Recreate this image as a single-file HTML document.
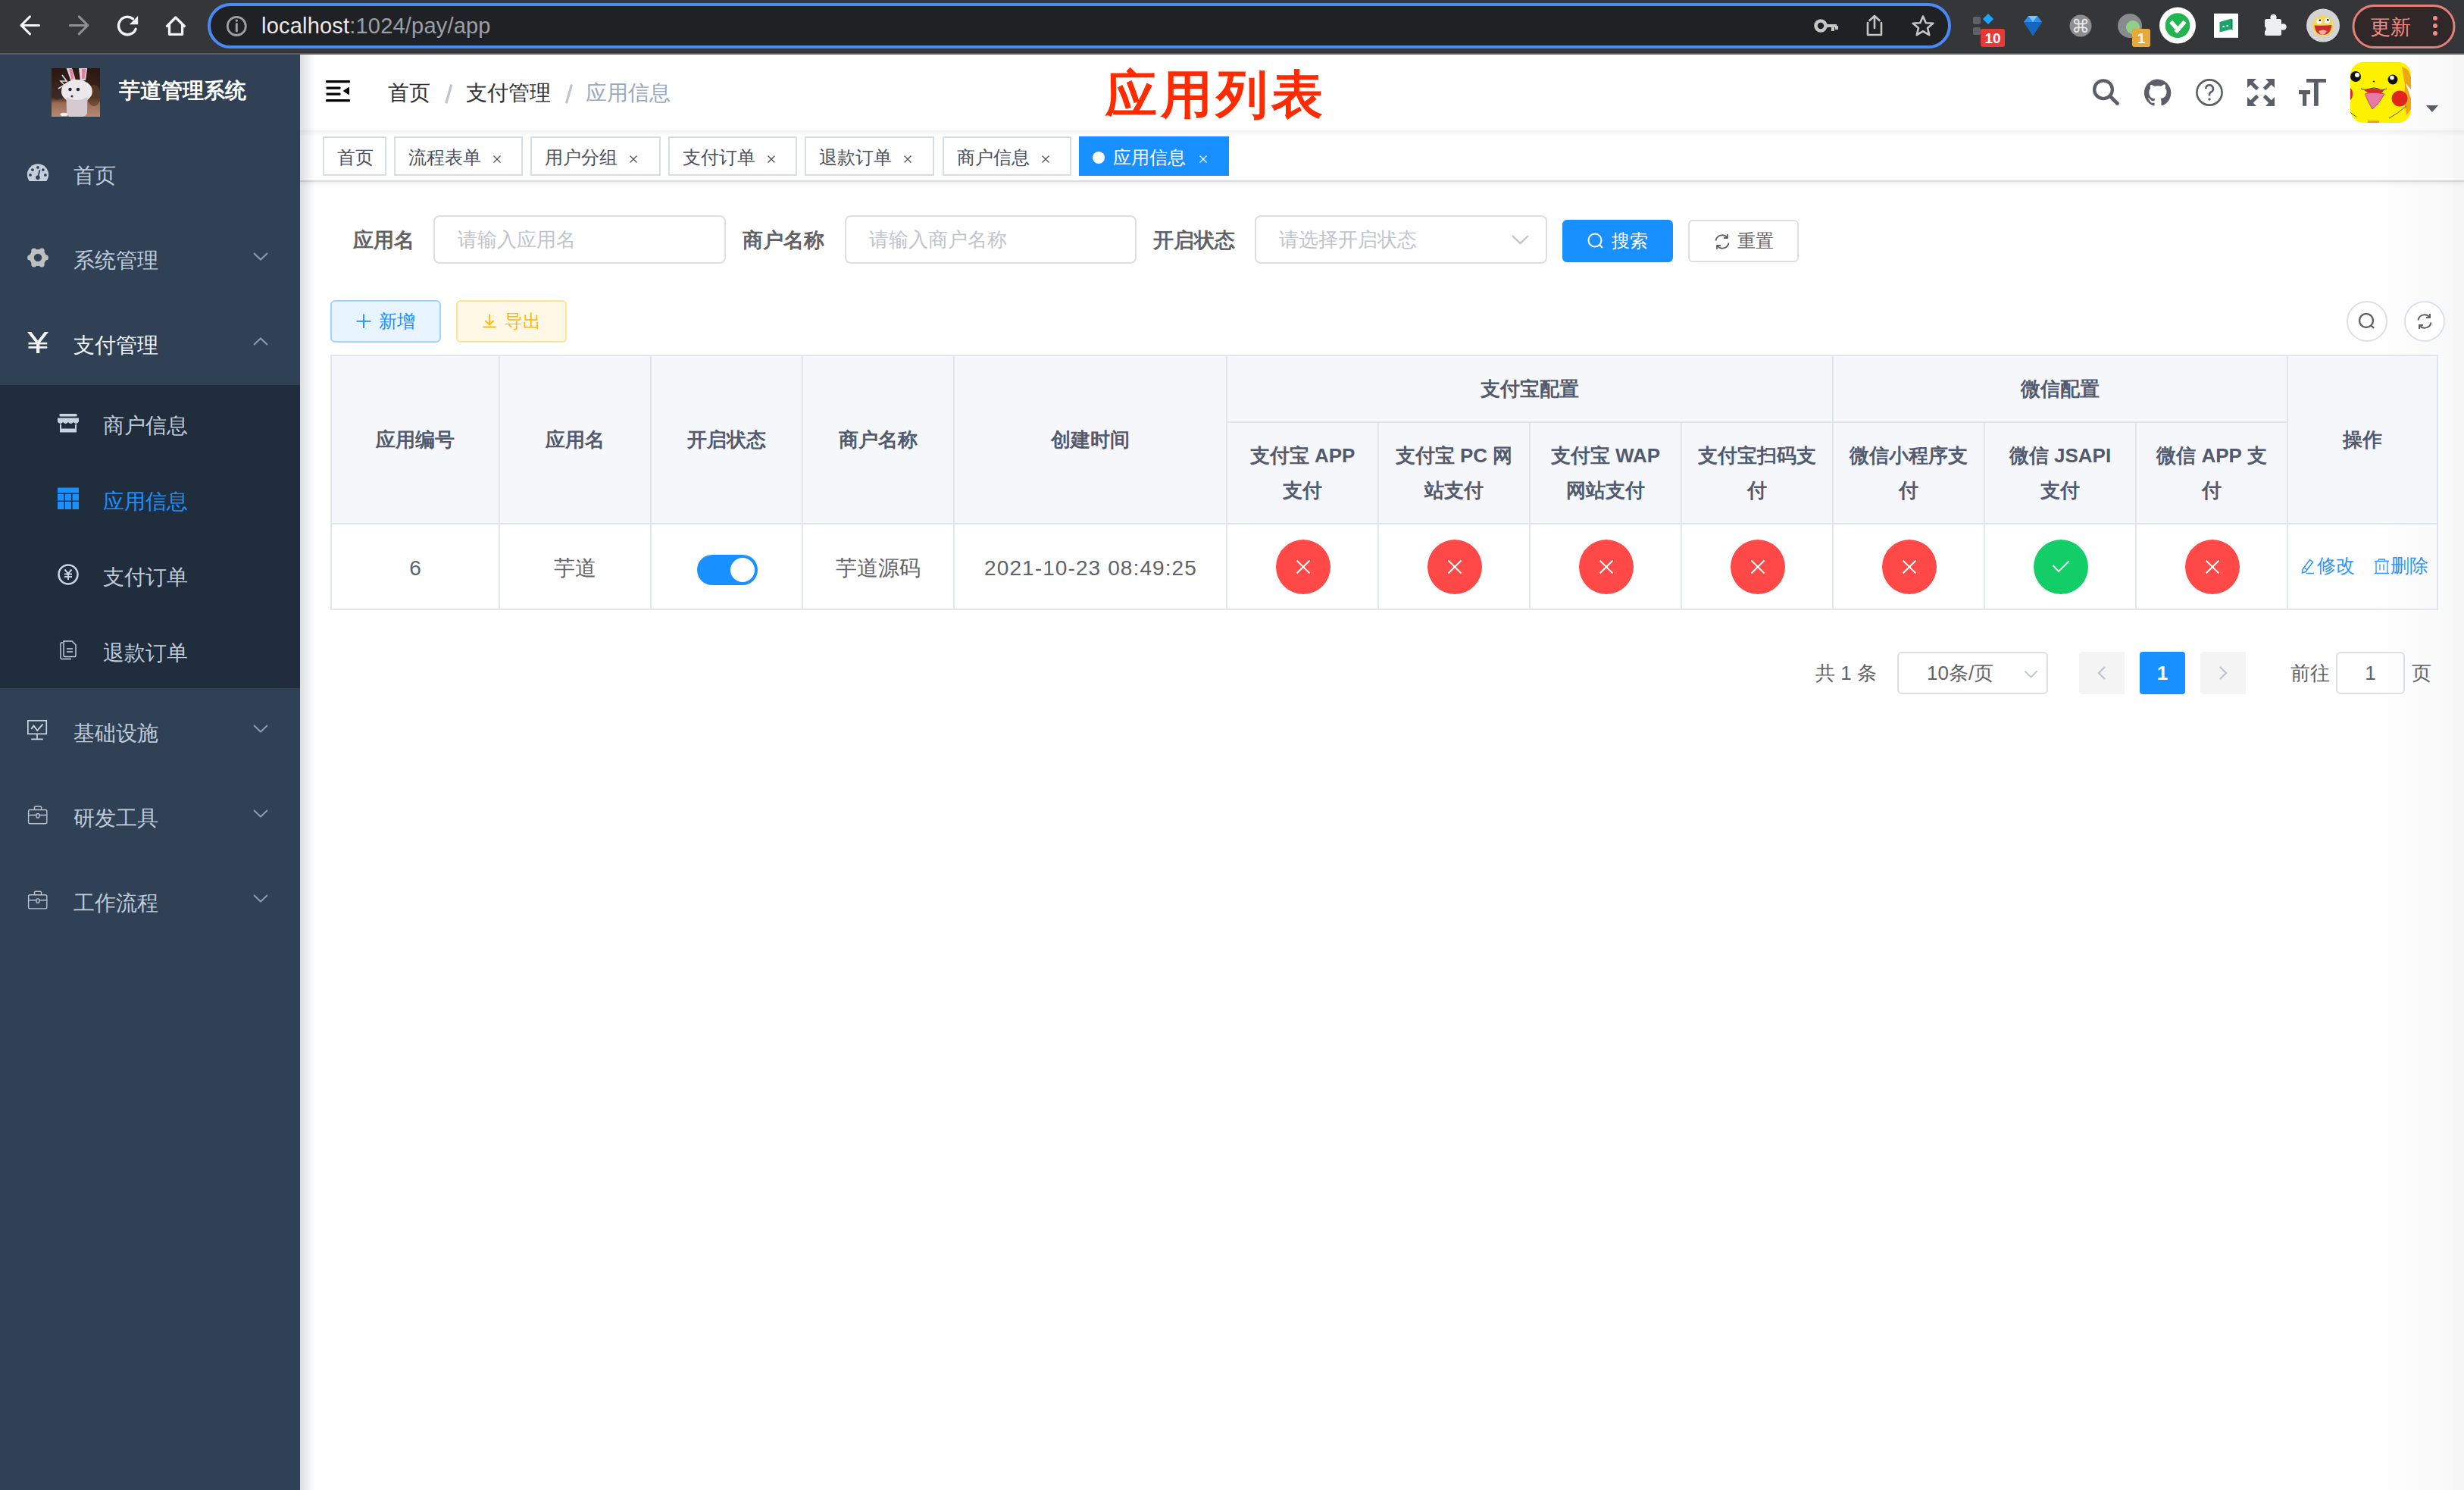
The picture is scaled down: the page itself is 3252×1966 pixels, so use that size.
<!DOCTYPE html>
<html><head><meta charset="utf-8">
<style>
*{box-sizing:border-box;margin:0;padding:0}
html,body{width:3252px;height:1966px;overflow:hidden;background:#fff;font-family:"Liberation Sans",sans-serif}
.a{position:absolute}
/* chrome */
#chrome{left:0;top:0;width:3252px;height:72px;background:#35363a;border-bottom:2px solid #5b5c60}
#url{left:274px;top:4px;width:2301px;height:60px;border:4px solid #4a8af4;border-radius:30px;background:#202124}
#urltext{left:345px;top:18px;font-size:29px;color:#e8eaed;white-space:nowrap;letter-spacing:0.2px}
#urltext span{color:#9aa0a6}
/* sidebar */
#side{left:0;top:72px;width:396px;height:1894px;background:#304156}
#sub{left:0;top:508px;width:396px;height:400px;background:#1f2d3d}
.mi{position:absolute;color:#bfcbd9;font-size:28px;white-space:nowrap;line-height:28px}
.chev{position:absolute;width:12px;height:12px;border-right:2px solid #8e9cad;border-bottom:2px solid #8e9cad}
/* content */
#navbar{left:396px;top:72px;width:2856px;height:100px;background:#fff}
#tags{left:396px;top:172px;width:2856px;height:68px;background:#fff;border-bottom:2px solid #d8dce5;box-shadow:0 2px 6px rgba(0,21,41,.08)}
.tag{position:absolute;top:180px;height:52px;border:2px solid #d8dce5;background:#fff;color:#495060;font-size:24px;line-height:51px;white-space:nowrap;padding-left:17px}
.tag .x{position:absolute;font-size:22px;color:#495060}
.lbl{position:absolute;top:301px;font-size:27px;font-weight:bold;color:#606266;white-space:nowrap;line-height:32px}
.inp{position:absolute;top:284px;height:64px;border:2px solid #dcdfe6;border-radius:8px;background:#fff;color:#c0c4cc;font-size:26px;line-height:60px;padding-left:30px;white-space:nowrap}
.btn{position:absolute;height:56px;border-radius:6px;font-size:24px;line-height:52px;white-space:nowrap;text-align:center}
.th{position:absolute;color:#515a6e;font-size:26px;font-weight:bold;text-align:center;line-height:46px;white-space:nowrap}
.td{position:absolute;color:#606266;font-size:28px;text-align:center;white-space:nowrap}
.vl{position:absolute;width:2px;background:#dfe6ec}
.hl{position:absolute;height:2px;background:#dfe6ec}
.circ{position:absolute;width:72px;height:72px;border-radius:36px;top:712px}
.red{background:#ff4949}
.green{background:#13ce66}
.pg{position:absolute;top:860px;height:56px;border-radius:4px;font-size:26px;text-align:center;line-height:56px}
</style></head><body>
<!-- CHROME -->
<div id="chrome" class="a"></div>
<div id="url" class="a"></div>
<div id="urltext" class="a">localhost<span>:1024/pay/app</span></div>


<!-- chrome icons -->
<svg class="a" style="left:0;top:0" width="3252" height="72">
 <g fill="none" stroke-linecap="round" stroke-linejoin="round">
  <path d="M28 33.4 H51.5 M28 33.4 L39.5 21.9 M28 33.4 L39.5 44.9" stroke="#f4f5f6" stroke-width="3"/>
  <path d="M115.8 33.4 H92.3 M115.8 33.4 L104.3 21.9 M115.8 33.4 L104.3 44.9" stroke="#8e9094" stroke-width="3"/>
  <path d="M179.1 38.3 A11.7 11.7 0 1 1 175.5 24.8" stroke="#f1f3f4" stroke-width="3.4" stroke-linecap="round"/>
  <path d="M182.1 21 V32.2 H170.9 Z" fill="#f1f3f4" stroke="none"/>
  <path d="M220.5 34.5 L231.8 23 L243.3 34.5 M223.5 32 V45.3 H240.6 V32" stroke="#f1f3f4" stroke-width="3.3"/>
  <circle cx="312.3" cy="34.5" r="12" stroke="#9aa0a6" stroke-width="2.8"/>
  <path d="M312.3 31.5 V41" stroke="#9aa0a6" stroke-width="3"/>
  <circle cx="312.3" cy="27.2" r="1.6" fill="#9aa0a6" stroke="none"/>
  <!-- key -->
  <circle cx="2403" cy="34" r="6.5" stroke="#c4c7c5" stroke-width="4.5"/>
  <path d="M2410 34 H2424 M2419 34 V41 M2424 34 V39" stroke="#c4c7c5" stroke-width="4" stroke-linecap="butt"/>
  <!-- share -->
  <path d="M2465 30 V46 H2483 V30" stroke="#c4c7c5" stroke-width="2.6"/>
  <path d="M2474 37 V21 M2467.5 27 L2474 21 L2480.5 27" stroke="#c4c7c5" stroke-width="2.6"/>
  <!-- star -->
  <path d="M2538 21.5 L2541.8 30.2 L2551.3 30.8 L2544 37 L2546.3 46.2 L2538 41.2 L2529.7 46.2 L2532 37 L2524.7 30.8 L2534.2 30.2 Z" stroke="#c4c7c5" stroke-width="2.6"/>
 </g>
 <!-- ext 1 -->
 <rect x="2604" y="22" width="10" height="10" rx="2" fill="#5f6368"/>
 <rect x="2604" y="36" width="10" height="10" rx="2" fill="#5f6368"/>
 <rect x="2619" y="20" width="10" height="10" fill="#1aa3ff" transform="rotate(45 2624 25)"/>
 <rect x="2614" y="38" width="32" height="24" rx="3" fill="#e53935"/>
 <text x="2630" y="57" font-size="19" font-family="Liberation Sans" font-weight="bold" fill="#fff" text-anchor="middle">10</text>
 <!-- gem -->
 <path d="M2671 29 L2677 21 L2689 21 L2695 29 L2683 47 Z" fill="#2f8fe6"/>
 <path d="M2671 29 L2695 29 L2683 47 Z" fill="#1566c0"/>
 <path d="M2677 21 L2683 29 L2689 21 Z" fill="#7cc6ff"/>
 <!-- cmd -->
 <circle cx="2746" cy="34" r="14.5" fill="#8d8e91"/>
 <text x="2746" y="43" font-size="24" font-family="Liberation Sans" fill="#e8e8e8" text-anchor="middle">&#8984;</text>
 <!-- grey circle w badge -->
 <circle cx="2811" cy="34" r="16" fill="#8a8b8e"/>
 <circle cx="2815" cy="36" r="9" fill="#8fd08a"/>
 <rect x="2814" y="38" width="24" height="24" rx="3" fill="#e8a93c"/>
 <text x="2826" y="57" font-size="19" font-family="Liberation Sans" font-weight="bold" fill="#fff" text-anchor="middle">1</text>
 <!-- green y -->
 <circle cx="2874" cy="33.6" r="24" fill="#fff"/>
 <circle cx="2874" cy="33.6" r="16.3" fill="#22b54f"/>
 <path d="M2865 28.5 L2872.5 37 M2883.5 28.5 L2871.5 42.5" stroke="#fff" stroke-width="5.5" stroke-linecap="butt"/>
 <!-- green square -->
 <rect x="2922" y="17.8" width="32" height="32" fill="#fff"/>
 <path d="M2929.5 29 L2945 24.5 V38.5 L2929.5 42.5 Z" fill="#1aa36b"/>
 <path d="M2945 24.5 L2946.5 26 V40 L2945 38.5 Z" fill="#0d7a4d"/>
 <rect x="2933.5" y="34" width="2.2" height="2.2" fill="#fff"/><rect x="2938.5" y="33" width="2.2" height="2.2" fill="#fff"/>
 <!-- puzzle -->
 <g fill="#eeeff1">
  <rect x="2989" y="25" width="22" height="22" rx="2.5"/>
  <circle cx="3000.5" cy="23" r="4.2"/>
  <circle cx="3013.5" cy="35.5" r="4.2"/>
 </g>
 <circle cx="2987" cy="38" r="3.6" fill="#35363a"/>
 <!-- emoji avatar -->
 <circle cx="3066" cy="33.6" r="22" fill="#d4d4d4"/>
 <circle cx="3066" cy="34.5" r="14" fill="#f8d65a"/>
 <path d="M3054.5 33.5 Q3066 34 3077.5 33 Q3076 46 3066 46 Q3056 46 3054.5 33.5 Z" fill="#c9302c"/>
 <path d="M3060 41 Q3066 38 3071 41 Q3068 46 3066 46 Q3062 46 3060 41 Z" fill="#f7a8a8"/>
 <circle cx="3061" cy="28" r="3.6" fill="#fff"/><circle cx="3071.5" cy="27.5" r="3.6" fill="#fff"/>
 <circle cx="3061.8" cy="26.8" r="1.3" fill="#000"/><circle cx="3072.3" cy="26.3" r="1.3" fill="#000"/>
 <!-- update pill -->
 <rect x="3106" y="7.5" width="133" height="55" rx="27.5" fill="#302729" stroke="#e57f77" stroke-width="3"/>
 <text x="3154.5" y="44.5" font-size="27" font-family="Liberation Sans" fill="#f28b82" text-anchor="middle">更新</text>
 <circle cx="3214" cy="24" r="3" fill="#f28b82"/><circle cx="3214" cy="34" r="3" fill="#f28b82"/><circle cx="3214" cy="44" r="3" fill="#f28b82"/>
</svg>

<!-- SIDEBAR -->
<div id="side" class="a"></div>
<div id="sub" class="a"></div>
<svg class="a" style="left:68px;top:90px" width="64" height="64">
 <defs><linearGradient id="lg" x1="0" y1="0" x2="0" y2="1"><stop offset="0" stop-color="#2a1812"/><stop offset="0.6" stop-color="#3e261c"/><stop offset="0.72" stop-color="#9a6c55"/><stop offset="1" stop-color="#b68a72"/></linearGradient></defs>
 <rect width="64" height="64" fill="url(#lg)"/>
 <ellipse cx="56" cy="36" rx="9" ry="14" fill="#5e3d2c" opacity=".7"/>
 <ellipse cx="7" cy="30" rx="6" ry="12" fill="#3a2a2a" opacity=".6"/>
 <path d="M19.6 0 H27 L32 16 L26 18 Z" fill="#dcd6da"/><path d="M23 1 L27 1 L29.5 14 L26.5 15 Z" fill="#e27fa0"/>
 <path d="M36 0 H47.2 L45 16 L38 17 Z" fill="#dcd6da"/><path d="M40 1 L45.5 1 L43.5 14 L40 14 Z" fill="#e27fa0"/>
 <ellipse cx="33.4" cy="30.5" rx="20.5" ry="15.5" fill="#ebe8ec"/>
 <path d="M19.5 38 Q33 46 47.5 38 L47 60 Q44 64 40 64 H24 Q20 62 20 58 Z" fill="#d6cad0"/>
 <ellipse cx="16.5" cy="61" rx="5" ry="2.3" fill="#eee"/>
 <circle cx="24.5" cy="28" r="2.3" fill="#1d2b44"/><circle cx="35" cy="28" r="2.3" fill="#1d2b44"/>
 <circle cx="27" cy="37" r="1.6" fill="#5a2a1a"/>
 <path d="M14 9 L20 17 L12 17 L17 22 L9 27" fill="none" stroke="#ddd" stroke-width="1.6"/>
</svg>
<div class="mi" style="left:157px;top:106px;color:#fff;font-weight:bold">芋道管理系统</div>
<div class="mi" style="left:97px;top:218px">首页</div>
<div class="mi" style="left:97px;top:330px">系统管理</div>
<div class="mi" style="left:97px;top:442px;color:#f4f4f5">支付管理</div>
<div class="mi" style="left:136px;top:548px">商户信息</div>
<div class="mi" style="left:136px;top:648px;color:#1890ff">应用信息</div>
<div class="mi" style="left:136px;top:748px">支付订单</div>
<div class="mi" style="left:136px;top:848px">退款订单</div>
<div class="mi" style="left:97px;top:954px">基础设施</div>
<div class="mi" style="left:97px;top:1066px">研发工具</div>
<div class="mi" style="left:97px;top:1178px">工作流程</div>


<!-- sidebar icons -->
<svg class="a" style="left:0;top:172px" width="396" height="1100">
 <!-- dashboard -->
 <g transform="translate(36,45)">
  <path d="M2.75 21.9 A14.1 14.1 0 1 1 25.25 21.9 Z" fill="#c3cfdd"/>
  <g fill="#304156"><circle cx="4" cy="13.9" r="1.9"/><circle cx="6.9" cy="7.1" r="1.9"/><circle cx="13.95" cy="3.9" r="1.9"/><circle cx="20.9" cy="7.1" r="1.9"/><circle cx="23.9" cy="13.9" r="1.9"/>
  <circle cx="13.95" cy="17.2" r="2.8"/></g>
  <path d="M13.95 17.2 L16.4 7.8" stroke="#304156" stroke-width="1.8" stroke-linecap="round"/>
 </g>
 <!-- gear -->
 <g transform="translate(50,167.9)" fill="#bfbfbf">
  <circle r="11"/><circle cx="10.30" cy="0.00" r="3.6"/><circle cx="5.15" cy="8.92" r="3.6"/><circle cx="-5.15" cy="8.92" r="3.6"/><circle cx="-10.30" cy="0.00" r="3.6"/><circle cx="-5.15" cy="-8.92" r="3.6"/><circle cx="5.15" cy="-8.92" r="3.6"/>
  <circle r="5.2" fill="#304156"/>
 </g>
 <!-- yen -->
 <g fill="#f4f4f5" transform="translate(0,-172)">
  <path d="M36 438 H41.3 L50 449.6 L58.7 438 H64 L52.6 452.5 H47.4 Z"/>
  <rect x="48" y="450" width="4.3" height="16"/>
  <rect x="37.5" y="451.8" width="24.8" height="2.6"/>
  <rect x="37.5" y="457" width="24.8" height="2.7"/>
 </g>
 <!-- store -->
 <g fill="#c9d4e1">
  <rect x="78.5" y="374" width="23" height="3.5" rx="1"/>
  <path d="M76 379.5 H104 V384.5 Q100.5 389 97 385 Q93.5 389 90 385 Q86.5 389 83 385 Q79.5 389 76 384.5 Z"/>
  <path d="M79 387 V398.5 H101 V387 L99 388.5 V393.5 H81 V388.5 Z"/>
 </g>
 <!-- grid -->
 <g fill="#1890ff">
  <rect x="76" y="471.5" width="28" height="7"/>
  <rect x="76" y="480" width="8.5" height="8.5"/><rect x="86" y="480" width="8" height="8.5"/><rect x="95.5" y="480" width="8.5" height="8.5"/>
  <rect x="76" y="490" width="8.5" height="10"/><rect x="86" y="490" width="8" height="10"/><rect x="95.5" y="490" width="8.5" height="10"/>
 </g>
 <!-- yen circle -->
 <circle cx="90" cy="586" r="12.5" fill="none" stroke="#c9d4e1" stroke-width="2.6"/>
 <g stroke="#c9d4e1" stroke-width="2" fill="none"><path d="M85.5 579.5 L90 585 L94.5 579.5 M90 585 V593 M85 585.5 H95 M85 589 H95"/></g>
 <!-- doc -->
 <g stroke="#c9d4e1" stroke-width="1.4" fill="none">
  <path d="M83 676 H81 Q80 676 80 677 V696 Q80 697.5 81.5 697.5 H94"/>
  <path d="M84 674 H95 L100 679 V693 Q100 694.5 98.5 694.5 H85.5 Q84 694.5 84 693 Z"/>
  <path d="M88 684 H96 M88 688 H96"/>
 </g>
 <!-- monitor -->
 <g stroke="#c9d4e1" stroke-width="1.7" fill="none">
  <rect x="36.85" y="778.85" width="24.4" height="17.5"/>
  <path d="M49 796.5 V803.3 M41.2 803.4 H56.8"/>
  <path d="M41.3 789.9 L44.5 785.6 L49.2 791.8 L56.7 783.3" stroke-width="1.9"/>
 </g>
 <!-- briefcase x2 -->
 <g stroke="#bcc3cf" stroke-width="1.4" fill="none">
  <rect x="37.6" y="896.5" width="24.2" height="18.2" rx="2"/>
  <path d="M45.5 896.5 V893.2 Q45.5 892 46.7 892 H53.3 Q54.5 892 54.5 893.2 V896.5 M37.6 903.5 H48 M51.7 903.5 H61.8"/>
  <rect x="48" y="901.7" width="3.7" height="5.3" rx="1"/>
 </g>
 <g stroke="#bcc3cf" stroke-width="1.4" fill="none" transform="translate(0,112.2)">
  <rect x="37.6" y="896.5" width="24.2" height="18.2" rx="2"/>
  <path d="M45.5 896.5 V893.2 Q45.5 892 46.7 892 H53.3 Q54.5 892 54.5 893.2 V896.5 M37.6 903.5 H48 M51.7 903.5 H61.8"/>
  <rect x="48" y="901.7" width="3.7" height="5.3" rx="1"/>
 </g>
 <!-- chevrons -->
 <g stroke="#8d9aab" stroke-width="2" fill="none">
  <path d="M335 162 L344 170.5 L353 162"/>
  <path d="M335 283 L344 274.5 L353 283"/>
  <path d="M335 785 L344 793.5 L353 785"/>
  <path d="M335 897 L344 905.5 L353 897"/>
  <path d="M335 1009 L344 1017.5 L353 1009"/>
 </g>
</svg>

<!-- NAVBAR -->
<div id="navbar" class="a"></div>
<div id="tags" class="a"></div>
<div class="a" style="left:396px;top:172px;width:2856px;height:8px;background:linear-gradient(to bottom,rgba(0,21,41,.05),rgba(0,21,41,0))"></div>

<!-- navbar content -->
<svg class="a" style="left:428px;top:104px" width="36" height="32">
 <rect x="2" y="2" width="32" height="3.2" rx="1" fill="#000"/>
 <rect x="2.5" y="10.5" width="19" height="3.2" rx="1" fill="#000"/>
 <rect x="2.5" y="18.5" width="19" height="3.2" rx="1" fill="#000"/>
 <rect x="2" y="27" width="32" height="3.2" rx="1" fill="#000"/>
 <path d="M24.5 16 L33 10.5 V21.5 Z" fill="#000"/>
</svg>
<div class="a" style="left:512px;top:105px;font-size:28px;line-height:36px;color:#303133;white-space:nowrap">首页</div>
<svg class="a" style="left:580px;top:105px" width="200" height="36"><path d="M15.8 6.5 L8.8 31.3 M174.5 6.5 L167.5 31.3" stroke="#c0c4cc" stroke-width="3.2"/></svg>
<div class="a" style="left:615px;top:105px;font-size:28px;line-height:36px;color:#303133;white-space:nowrap">支付管理</div>

<div class="a" style="left:773px;top:105px;font-size:28px;line-height:36px;color:#97a8be;white-space:nowrap">应用信息</div>
<div class="a" style="left:1459px;top:79px;font-size:68px;line-height:90px;color:#fe2a00;font-weight:bold;white-space:nowrap;letter-spacing:5px">应用列表</div>
<!-- right icons -->
<svg class="a" style="left:2740px;top:90px" width="500" height="80">
 <g fill="none" stroke="#5a5e66">
  <circle cx="36" cy="28.2" r="11.9" stroke-width="4.3"/>
  <path d="M45 37 L54.5 46.5" stroke-width="4.6" stroke-linecap="round"/>
  <circle cx="176" cy="32" r="16.6" stroke-width="2.6"/>
  <path d="M171.3 27 A4.8 4.8 0 1 1 178 31.5 Q176 32.5 176 34.5 V36.5" stroke-width="2.6"/>
 </g>
 <circle cx="176" cy="41" r="1.7" fill="#5a5e66"/>
 <!-- github -->
 <path transform="translate(90,14) scale(1.5)" fill="#5a5e66" d="M12 0.3a12 12 0 0 0-3.8 23.4c.6.1.8-.3.8-.6v-2c-3.3.7-4-1.6-4-1.6-.6-1.4-1.4-1.8-1.4-1.8-1-.7.1-.7.1-.7 1.200.1 1.8 1.2 1.8 1.2 1 1.8 2.8 1.3 3.5 1 0-.8.4-1.3.7-1.6-2.700-.3-5.500-1.300-5.500-6 0-1.200.5-2.300 1.300-3.100-.2-.4-.6-1.600 0-3.200 0 0 1-.3 3.400 1.200a11.500 11.500 0 0 1 6 0C17.300 4.800 18.300 5.100 18.300 5.100c.6 1.600.2 2.800.1 3.200.8.8 1.300 1.900 1.300 3.100 0 4.600-2.800 5.600-5.500 6 .4.4.8 1.100.8 2.200v3.300c0 .3.2.7.8.6A12 12 0 0 0 12 .3"/>
 <!-- fullscreen -->
 <g fill="#5a5e66">
  <path d="M226 14 H238 L226 26 Z"/><path d="M262 14 H250 L262 26 Z"/>
  <path d="M226 50 H238 L226 38 Z"/><path d="M262 50 H250 L262 38 Z"/>
 </g>
 <g stroke="#5a5e66" stroke-width="4.8">
  <path d="M231 19 L239.5 27.5"/><path d="M257 19 L248.5 27.5"/>
  <path d="M231 45 L239.5 36.5"/><path d="M257 45 L248.5 36.5"/>
 </g>
 <!-- text size -->
 <g fill="#5a5e66">
  <rect x="304" y="14" width="26" height="4.8"/>
  <rect x="314" y="14" width="5.8" height="35.8"/>
  <rect x="294" y="29" width="15" height="5.3"/>
  <rect x="299" y="29" width="5.2" height="20.8"/>
 </g>
</svg>
<!-- avatar -->
<div class="a" style="left:3102px;top:82px;width:80px;height:80px;border-radius:17px;background:#fff200;overflow:hidden">
 <svg width="80" height="80">
  <path d="M68 6 L76 10 L80 20 L80 62 L74 70 Q70 50 72 30 Z" fill="#f3a712"/>
  <path d="M73 28 L80 36 L80 48 Z" fill="#fff"/>
  <ellipse cx="-1" cy="42" rx="4" ry="8" fill="#e0261d"/>
  <circle cx="7" cy="19" r="7" fill="#111"/><circle cx="9" cy="17" r="3" fill="#fff"/>
  <circle cx="56" cy="23" r="6.5" fill="#111"/><circle cx="55" cy="20.5" r="2.8" fill="#fff"/>
  <ellipse cx="31" cy="25.5" rx="1.3" ry="0.9" fill="#222"/>
  <circle cx="65" cy="48" r="10.5" fill="#e0261d"/>
  <path d="M14 35 Q19 37 21 36 L31 34 Q37 34 40 37 Q44 37 48 35" fill="none" stroke="#333" stroke-width="1"/>
  <path d="M18 37 Q30 33 44 37 Q42 42 36 43 Q26 43 18 37 Z" fill="#de2a22"/>
  <path d="M19.5 41.5 Q31 39 45 42 Q38 55 29 62 Q22 50 19.5 41.5 Z" fill="#e77aa6" stroke="#c0306a" stroke-width="0.8"/>
  <path d="M51 74 Q62 68 74 58" fill="none" stroke="#555" stroke-width="1"/>
  <path d="M0 66 Q4 70 8 72" fill="none" stroke="#555" stroke-width="1"/>
  <rect x="23" y="77" width="15" height="3" fill="#f39c12"/>
 </svg>
</div>
<svg class="a" style="left:3200px;top:137px" width="20" height="14"><path d="M2 2 H18 L10 11 Z" fill="#5a5e66"/></svg>

<!-- tags -->
<div class="tag" style="left:426px;width:84px">首页</div>
<div class="tag" style="left:520px;width:170px">流程表单</div>
<svg class="a" style="left:650px;top:204px" width="12" height="12"><path d="M1.5 1.5 L10.5 10.5 M10.5 1.5 L1.5 10.5" stroke="#495060" stroke-width="1.3"/></svg>
<div class="tag" style="left:700px;width:172px">用户分组</div>
<svg class="a" style="left:830px;top:204px" width="12" height="12"><path d="M1.5 1.5 L10.5 10.5 M10.5 1.5 L1.5 10.5" stroke="#495060" stroke-width="1.3"/></svg>
<div class="tag" style="left:882px;width:170px">支付订单</div>
<svg class="a" style="left:1012px;top:204px" width="12" height="12"><path d="M1.5 1.5 L10.5 10.5 M10.5 1.5 L1.5 10.5" stroke="#495060" stroke-width="1.3"/></svg>
<div class="tag" style="left:1062px;width:171px">退款订单</div>
<svg class="a" style="left:1192px;top:204px" width="12" height="12"><path d="M1.5 1.5 L10.5 10.5 M10.5 1.5 L1.5 10.5" stroke="#495060" stroke-width="1.3"/></svg>
<div class="tag" style="left:1244px;width:170px">商户信息</div>
<svg class="a" style="left:1374px;top:204px" width="12" height="12"><path d="M1.5 1.5 L10.5 10.5 M10.5 1.5 L1.5 10.5" stroke="#495060" stroke-width="1.3"/></svg>
<div class="tag" style="left:1424px;width:198px;background:#1890ff;border-color:#1890ff;color:#fff;padding-left:43px"><span class="a" style="left:16px;top:18px;width:16px;height:16px;border-radius:8px;background:#fff"></span>应用信息</div>
<svg class="a" style="left:1582px;top:204px" width="12" height="12"><path d="M1.5 1.5 L10.5 10.5 M10.5 1.5 L1.5 10.5" stroke="#fff" stroke-width="1.3"/></svg>



<!-- left shadow of content -->
<div class="a" style="left:396px;top:72px;width:20px;height:1894px;background:linear-gradient(to right,rgba(0,21,41,.14),rgba(0,21,41,0))"></div>
<!-- right edge gradient -->
<div class="a" style="left:3130px;top:72px;width:122px;height:1894px;background:linear-gradient(to right,rgba(30,40,60,0) 0%,rgba(30,40,60,.03) 89%,rgba(30,40,60,.045) 89.5%,rgba(30,40,60,.045) 100%)"></div>

<!-- search form -->
<div class="lbl" style="left:466px">应用名</div>
<div class="inp" style="left:572px;width:386px">请输入应用名</div>
<div class="lbl" style="left:980px">商户名称</div>
<div class="inp" style="left:1115px;width:385px">请输入商户名称</div>
<div class="lbl" style="left:1522px">开启状态</div>
<div class="inp" style="left:1656px;width:386px">请选择开启状态</div>
<svg class="a" style="left:1992px;top:306px" width="30" height="20"><path d="M4 5 L14.5 15 L25 5" fill="none" stroke="#c0c4cc" stroke-width="2.4"/></svg>
<div class="btn" style="left:2062px;top:290px;width:146px;background:#1890ff;color:#fff;border:2px solid #1890ff;padding-left:32px">搜索</div>
<svg class="a" style="left:2092px;top:304px" width="28" height="28"><circle cx="13" cy="13" r="8.5" fill="none" stroke="#fff" stroke-width="2"/><path d="M19.2 19.2 L23 23" stroke="#fff" stroke-width="2"/></svg>
<div class="btn" style="left:2228px;top:290px;width:146px;background:#fff;color:#606266;border:2px solid #dcdfe6;padding-left:32px">重置</div>
<svg class="a" style="left:2259px;top:305px" width="28" height="28"><g fill="none" stroke="#606266" stroke-width="1.8"><path d="M5.5 12.5 A8.5 8.5 0 0 1 20.5 8.5"/><path d="M22.5 15.5 A8.5 8.5 0 0 1 7.5 19.5"/><path d="M21 4 V9 H16"/><path d="M7 24 V19 H12"/></g></svg>

<!-- toolbar -->
<div class="btn" style="left:436px;top:396px;width:146px;height:56px;background:#e8f4ff;color:#1890ff;border:2px solid #a3d3ff;padding-left:30px">新增</div>
<svg class="a" style="left:466px;top:410px" width="28" height="28"><path d="M14 4.5 V23 M4.5 13.8 H23.5" stroke="#1890ff" stroke-width="1.8"/></svg>
<div class="btn" style="left:602px;top:396px;width:146px;height:56px;background:#fff8e6;color:#ffba00;border:2px solid #ffe399;padding-left:30px">导出</div>
<svg class="a" style="left:632px;top:410px" width="28" height="28"><path d="M14 4.5 V18.5 M8.5 13 L14 18.5 L19.5 13 M5.5 21.5 H22.5" fill="none" stroke="#ffba00" stroke-width="1.8"/></svg>
<div class="a" style="left:3097px;top:397px;width:54px;height:54px;border-radius:27px;border:2px solid #dcdfe6;background:#fff"></div>
<svg class="a" style="left:3110px;top:410px" width="28" height="28"><circle cx="13" cy="13" r="9" fill="none" stroke="#606266" stroke-width="2.4"/><path d="M19.5 19.5 L23 23" stroke="#606266" stroke-width="2.4"/></svg>
<div class="a" style="left:3173px;top:397px;width:54px;height:54px;border-radius:27px;border:2px solid #dcdfe6;background:#fff"></div>
<svg class="a" style="left:3186px;top:410px" width="28" height="28"><g fill="none" stroke="#606266" stroke-width="2"><path d="M5.5 12.5 A8.5 8.5 0 0 1 20.5 8.5"/><path d="M22.5 15.5 A8.5 8.5 0 0 1 7.5 19.5"/><path d="M21 4 V9 H16"/><path d="M7 24 V19 H12"/></g></svg>

<!-- table -->
<div class="a" style="left:436px;top:468px;width:2782px;height:224px;background:#f5f7fa"></div>
<div class="hl" style="left:436px;top:468px;width:2782px"></div>
<div class="hl" style="left:1618px;top:556px;width:1401px"></div>
<div class="hl" style="left:436px;top:690px;width:2782px"></div>
<div class="hl" style="left:436px;top:803px;width:2782px"></div>
<div class="vl" style="left:436px;top:468px;height:337px"></div>
<div class="vl" style="left:658px;top:468px;height:337px"></div>
<div class="vl" style="left:858px;top:468px;height:337px"></div>
<div class="vl" style="left:1058px;top:468px;height:337px"></div>
<div class="vl" style="left:1258px;top:468px;height:337px"></div>
<div class="vl" style="left:1618px;top:468px;height:337px"></div>
<div class="vl" style="left:1818px;top:556px;height:249px"></div>
<div class="vl" style="left:2018px;top:556px;height:249px"></div>
<div class="vl" style="left:2218px;top:556px;height:249px"></div>
<div class="vl" style="left:2418px;top:468px;height:337px"></div>
<div class="vl" style="left:2618px;top:556px;height:249px"></div>
<div class="vl" style="left:2818px;top:556px;height:249px"></div>
<div class="vl" style="left:3018px;top:468px;height:337px"></div>
<div class="vl" style="left:3216px;top:468px;height:337px"></div>

<div class="th" style="left:438px;top:557px;width:220px">应用编号</div>
<div class="th" style="left:660px;top:557px;width:198px">应用名</div>
<div class="th" style="left:860px;top:557px;width:198px">开启状态</div>
<div class="th" style="left:1060px;top:557px;width:198px">商户名称</div>
<div class="th" style="left:1260px;top:557px;width:358px">创建时间</div>
<div class="th" style="left:1620px;top:490px;width:798px">支付宝配置</div>
<div class="th" style="left:2420px;top:490px;width:598px">微信配置</div>
<div class="th" style="left:3020px;top:557px;width:196px">操作</div>
<div class="th" style="left:1620px;top:578px;width:198px">支付宝 APP<br>支付</div>
<div class="th" style="left:1820px;top:578px;width:198px">支付宝 PC 网<br>站支付</div>
<div class="th" style="left:2020px;top:578px;width:198px">支付宝 WAP<br>网站支付</div>
<div class="th" style="left:2220px;top:578px;width:198px">支付宝扫码支<br>付</div>
<div class="th" style="left:2420px;top:578px;width:198px">微信小程序支<br>付</div>
<div class="th" style="left:2620px;top:578px;width:198px">微信 JSAPI<br>支付</div>
<div class="th" style="left:2820px;top:578px;width:198px">微信 APP 支<br>付</div>

<div class="td" style="left:438px;top:730px;width:220px;line-height:40px">6</div>
<div class="td" style="left:660px;top:730px;width:198px;line-height:40px">芋道</div>
<div class="a" style="left:920px;top:732px;width:80px;height:40px;border-radius:20px;background:#1890ff"></div>
<div class="a" style="left:964px;top:736px;width:32px;height:32px;border-radius:16px;background:#fff"></div>
<div class="td" style="left:1060px;top:730px;width:198px;line-height:40px">芋道源码</div>
<div class="td" style="left:1260px;top:730px;width:358px;line-height:40px;letter-spacing:1.1px;padding-left:1px">2021-10-23 08:49:25</div>

<div class="circ red" style="left:1684px"></div>
<div class="circ red" style="left:1884px"></div>
<div class="circ red" style="left:2084px"></div>
<div class="circ red" style="left:2284px"></div>
<div class="circ red" style="left:2484px"></div>
<div class="circ green" style="left:2684px"></div>
<div class="circ red" style="left:2884px"></div>
<svg class="a" style="left:1600px;top:700px" width="1400" height="100"><g stroke="#fff" stroke-width="1.9" fill="none">
 <path d="M111.5 39.5 L128.5 56.5 M128.5 39.5 L111.5 56.5"/>
 <path d="M311.5 39.5 L328.5 56.5 M328.5 39.5 L311.5 56.5"/>
 <path d="M511.5 39.5 L528.5 56.5 M528.5 39.5 L511.5 56.5"/>
 <path d="M711.5 39.5 L728.5 56.5 M728.5 39.5 L711.5 56.5"/>
 <path d="M911.5 39.5 L928.5 56.5 M928.5 39.5 L911.5 56.5"/>
 <path d="M1109.5 46 L1117 54 L1130.5 40.5"/>
 <path d="M1311.5 39.5 L1328.5 56.5 M1328.5 39.5 L1311.5 56.5"/>
</g></svg>
<div class="a" style="left:3058px;top:730px;font-size:25px;line-height:32px;color:#2f94f6;white-space:nowrap">修改</div>
<svg class="a" style="left:3034px;top:734px" width="26" height="28"><path d="M5 17.5 L14.5 4.5 L18.5 7.5 L9 20.5 L4.5 22 Z M6.5 14.5 L10.5 17.5 M10 22.5 H20" fill="none" stroke="#2f94f6" stroke-width="1.5"/></svg>
<div class="a" style="left:3155px;top:730px;font-size:25px;line-height:32px;color:#2f94f6;white-space:nowrap">删除</div>
<svg class="a" style="left:3131px;top:734px" width="26" height="28"><path d="M3 6.5 H22 M8.5 6.5 V4 H16.5 V6.5 M5 6.5 V22.5 H20 V6.5 M10 10.5 V18.5 M15 10.5 V18.5 M3 22.5 H22" fill="none" stroke="#2f94f6" stroke-width="1.3"/></svg>

<!-- pagination -->
<div class="a" style="left:2396px;top:870px;font-size:26px;line-height:36px;color:#606266;white-space:nowrap">共 1 条</div>
<div class="a" style="left:2504px;top:860px;width:199px;height:56px;border:2px solid #dcdfe6;border-radius:6px"></div>
<div class="a" style="left:2543px;top:870px;font-size:26px;line-height:36px;color:#606266;white-space:nowrap">10条/页</div>
<svg class="a" style="left:2669px;top:882px" width="24" height="16"><path d="M3.5 3.5 L11.5 11.5 L19.5 3.5" fill="none" stroke="#c0c4cc" stroke-width="1.8"/></svg>
<div class="pg" style="left:2744px;width:60px;background:#f4f4f5"></div>
<svg class="a" style="left:2760px;top:876px" width="28" height="24"><path d="M18 4 L10 12 L18 20" fill="none" stroke="#c0c4cc" stroke-width="2.4"/></svg>
<div class="pg" style="left:2824px;width:60px;background:#1890ff;color:#fff;font-weight:bold">1</div>
<div class="pg" style="left:2904px;width:60px;background:#f4f4f5"></div>
<svg class="a" style="left:2920px;top:876px" width="28" height="24"><path d="M10 4 L18 12 L10 20" fill="none" stroke="#c0c4cc" stroke-width="2.4"/></svg>
<div class="a" style="left:3023px;top:870px;font-size:26px;line-height:36px;color:#606266;white-space:nowrap">前往</div>
<div class="a" style="left:3083px;top:860px;width:91px;height:56px;border:2px solid #dcdfe6;border-radius:6px;text-align:center;font-size:26px;line-height:52px;color:#606266">1</div>
<div class="a" style="left:3183px;top:870px;font-size:26px;line-height:36px;color:#606266;white-space:nowrap">页</div>

</body></html>
